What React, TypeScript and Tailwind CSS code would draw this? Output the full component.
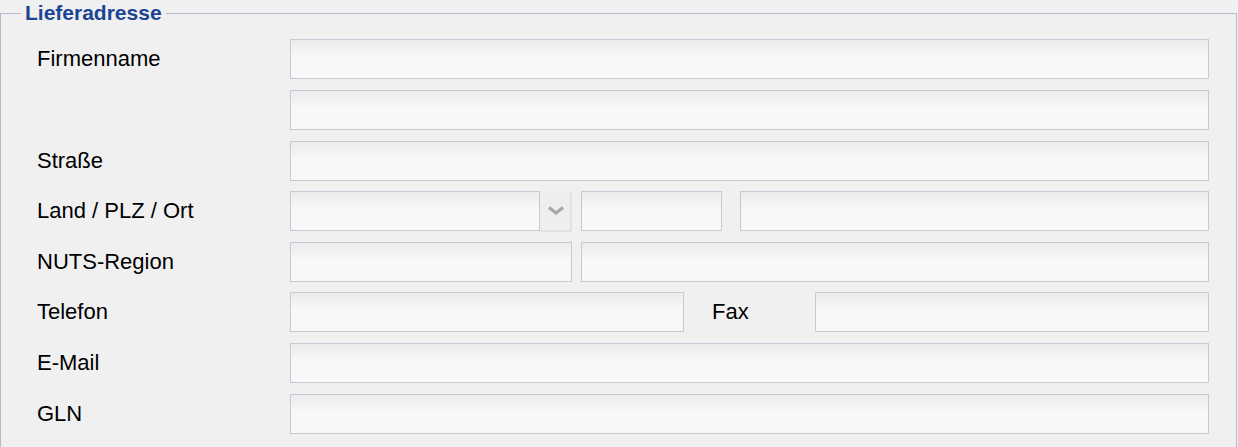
import React from "react";

const font = { fontFamily: '"Liberation Sans", Arial, sans-serif' };

// plain text box, the look of the old desktop form
function Field({ className = "" }: { className?: string }) {
  return (
    <input
      type="text"
      className={
        "h-[40px] border border-[#c8c8d6] bg-linear-to-b from-[#ebebeb] to-[#f8f8f8] to-45% px-2 text-[18px] outline-none " +
        className
      }
    />
  );
}

function Label({ children }: { children?: React.ReactNode }) {
  return (
    <div className="flex h-[40px] w-[253px] shrink-0 items-center text-[22px] leading-none text-black">
      {children}
    </div>
  );
}

function Row({ label, mt, children }: { label?: string; mt: string; children: React.ReactNode }) {
  return (
    <div className={"flex h-[40px] " + mt}>
      <Label>{label}</Label>
      <div className="flex w-[919px] items-start">{children}</div>
    </div>
  );
}

function Chevron() {
  return (
    <svg width="18" height="9" viewBox="0 0 18 9" fill="none">
      <polyline
        points="2,1.5 9,7 16,1.5"
        stroke="#a6a6a6"
        strokeWidth="3.2"
        strokeLinejoin="miter"
      />
    </svg>
  );
}

export default function App() {
  return (
    <div className="h-[447px] w-[1238px] overflow-hidden bg-[#f0f0f0]" style={font}>
      <fieldset className="h-[470px] w-[1237px] border border-[#b7b7cd]">
        <legend className="ml-[20px] px-[4px] text-[21px] font-bold leading-[26px] text-[#1b4594]">
          Lieferadresse
        </legend>

        <div className="mt-[13px] flex flex-col pl-[36px]">
          <Row label="Firmenname" mt="mt-0">
            <Field className="w-[919px]" />
          </Row>
          <Row mt="mt-[11px]">
            <Field className="w-[919px]" />
          </Row>
          <Row label="Straße" mt="mt-[11px]">
            <Field className="w-[919px]" />
          </Row>
          <Row label="Land / PLZ / Ort" mt="mt-[10px]">
            <Field className="w-[250px]" />
            <button
              type="button"
              className="flex h-[41px] w-[32px] shrink-0 items-center justify-center border-r-2 border-b-2 border-[#e2e2e2] bg-[#eeeeee] pl-[1px]"
            >
              <Chevron />
            </button>
            <Field className="ml-[9px] w-[141px]" />
            <Field className="ml-[18px] min-w-0 flex-1" />
          </Row>
          <Row label="NUTS-Region" mt="mt-[11px]">
            <Field className="w-[282px]" />
            <Field className="ml-[9px] min-w-0 flex-1" />
          </Row>
          <Row label="Telefon" mt="mt-[10px]">
            <Field className="w-[394px]" />
            <div className="flex h-[40px] w-[131px] shrink-0 items-center pl-[28px] text-[22px] leading-none text-black">
              Fax
            </div>
            <Field className="min-w-0 flex-1" />
          </Row>
          <Row label="E-Mail" mt="mt-[11px]">
            <Field className="w-[919px]" />
          </Row>
          <Row label="GLN" mt="mt-[11px]">
            <Field className="w-[919px]" />
          </Row>
        </div>
      </fieldset>
    </div>
  );
}
